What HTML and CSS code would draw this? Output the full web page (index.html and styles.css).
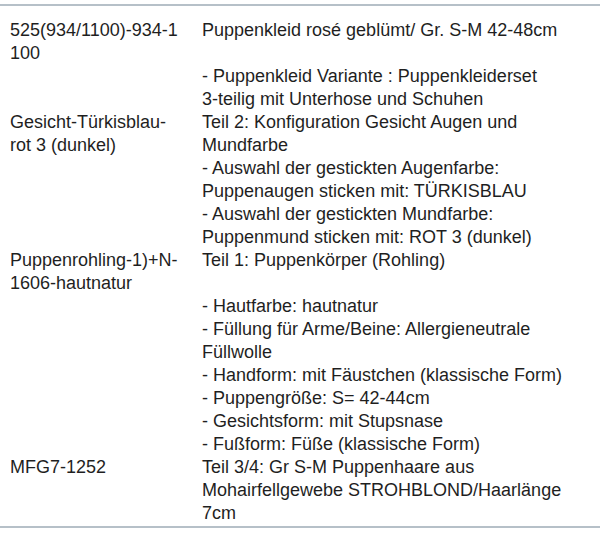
FILE: index.html
```html
<!DOCTYPE html>
<html lang="de">
<head>
<meta charset="utf-8">
<title>Puppenkonfiguration</title>
<link rel="stylesheet" href="styles.css">
</head>
<body>
<div class="table">
  <div class="row">
    <div class="sku sku-code">525(934/1100)-934-1100</div>
    <div class="desc">Puppenkleid rosé geblümt/ Gr. S-M 42-48cm<br><br>- Puppenkleid Variante : Puppenkleiderset <span class="nobreak">3-teilig</span> mit Unterhose und Schuhen</div>
  </div>
  <div class="row">
    <div class="sku">Gesicht-Türkisblau-rot 3 (dunkel)</div>
    <div class="desc">Teil 2: Konfiguration Gesicht Augen und Mundfarbe<br>- Auswahl der gestickten Augenfarbe: Puppenaugen sticken mit: TÜRKISBLAU<br>- Auswahl der gestickten Mundfarbe: Puppenmund sticken mit: ROT 3 (dunkel)</div>
  </div>
  <div class="row">
    <div class="sku">Puppenrohling-1)+N-1606-hautnatur</div>
    <div class="desc">Teil 1: Puppenkörper (Rohling)<br><br>- Hautfarbe: hautnatur<br>- Füllung für Arme/Beine: Allergieneutrale Füllwolle<br>- Handform: mit Fäustchen (klassische Form)<br>- Puppengröße: S= 42-44cm<br>- Gesichtsform: mit Stupsnase<br>- Fußform: Füße (klassische Form)</div>
  </div>
  <div class="row">
    <div class="sku">MFG7-1252</div>
    <div class="desc">Teil 3/4: Gr S-M Puppenhaare aus Mohairfellgewebe STROHBLOND/Haarlänge 7cm</div>
  </div>
</div>
</body>
</html>
```
FILE: styles.css
```css
html, body {
  margin: 0;
  padding: 0;
  background: #ffffff;
}
body {
  font-family: "Liberation Sans", Arial, sans-serif;
  font-size: 18px;
  line-height: 23px;
  color: #1f1f1f;
}
.table {
  margin-top: 4px;
  border-top: 2px solid #b6c0c8;
  border-bottom: 2px solid #b6c0c8;
  padding: 13px 0 1px;
}
.row {
  display: grid;
  grid-template-columns: 176px 380px;
  column-gap: 16px;
  padding-left: 10px;
}
.sku {
  overflow-wrap: anywhere;
}
.sku-code {
  word-break: break-all;
}
.desc {
  overflow-wrap: break-word;
}
.nobreak {
  white-space: nowrap;
}
```
